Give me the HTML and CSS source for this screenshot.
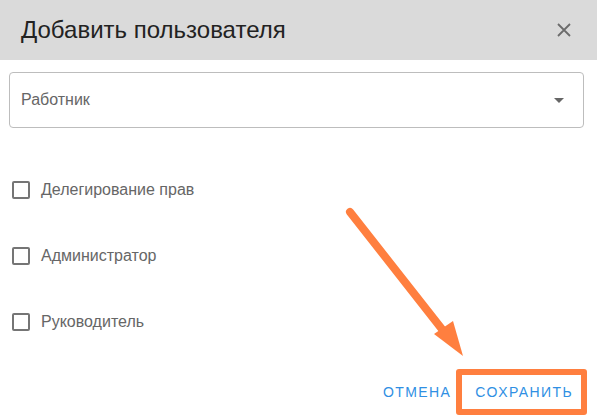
FILE: index.html
```html
<!DOCTYPE html>
<html lang="ru">
<head>
    <meta charset="UTF-8">
    <title>Добавить пользователя</title>
    <link rel="stylesheet" href="styles.css">
</head>
<body>

<div class="dialog">
    <div class="dialog-header">
        <h2>Добавить пользователя</h2>
        <button class="close-btn" aria-label="Закрыть">
            <svg width="14" height="14" viewBox="0 0 14 14">
                <path d="M1 1 L13 13 M13 1 L1 13" stroke="#6b6b6b" stroke-width="1.8" fill="none"/>
            </svg>
        </button>
    </div>

    <div class="dialog-body">
        <div class="select">
            <span>Работник</span>
            <span class="select-arrow"></span>
        </div>

        <div class="checks">
            <label class="check"><span class="box"></span>Делегирование прав</label>
            <label class="check"><span class="box"></span>Администратор</label>
            <label class="check"><span class="box"></span>Руководитель</label>
        </div>
    </div>

    <div class="dialog-actions">
        <button class="btn-text btn-cancel">Отмена</button>
        <div class="marked">
            <button class="btn-text btn-save">Сохранить</button>
        </div>
    </div>

    <svg class="annotation" width="597" height="420" viewBox="0 0 597 420">
        <line x1="350" y1="212" x2="445" y2="333" stroke="#ff7f3f" stroke-width="8" stroke-linecap="round"/>
        <polygon points="434,334 453,321 463,356" fill="#ff7f3f"/>
    </svg>
</div>

</body>
</html>
```

FILE: styles.css
```css
body { margin: 0; font-family: "Liberation Sans", Arial, sans-serif; background: #fff; }
.dialog { position: relative; width: 597px; height: 420px; background: #fff; display: flex; flex-direction: column; overflow: hidden; }
.dialog-header { height: 60px; flex-shrink: 0; background: #dadada; display: flex; align-items: center; justify-content: space-between; padding: 0 26px 0 21px; }
.dialog-header h2 { margin: 0; font-size: 24px; font-weight: normal; color: #222; }
.close-btn { background: none; border: none; padding: 0; display: flex; cursor: pointer; }
.dialog-body { padding: 12px 13px 0 9px; flex: 1; }
.select { height: 54px; border: 1px solid #bdbdbd; border-radius: 4px; display: flex; align-items: center; justify-content: space-between; padding: 0 19px 0 11px; font-size: 16px; color: #666; }
.select-arrow { width: 0; height: 0; border-left: 5px solid transparent; border-right: 5px solid transparent; border-top: 5px solid #666; }
.checks { margin-top: 53px; display: flex; flex-direction: column; gap: 48px; }
.check { display: flex; align-items: center; height: 18px; font-size: 16px; color: #666; padding-left: 3px; }
.box { width: 14px; height: 14px; border: 2px solid #757575; border-radius: 2px; margin-right: 11px; }
.dialog-actions { display: flex; justify-content: flex-end; align-items: center; height: 46px; padding: 0 10px 5px 0; flex-shrink: 0; }
.btn-text { background: none; border: none; font-family: inherit; font-size: 14px; letter-spacing: 1.4px; text-transform: uppercase; color: #2f8fe3; cursor: pointer; }
.btn-cancel { padding: 8px 5px 8px 8px; }
.marked { border: 6px solid #ff7f3f; border-radius: 3px; height: 34px; display: flex; }
.btn-save { padding: 0 8px 0 13px; }
.annotation { position: absolute; left: 0; top: 0; pointer-events: none; }
```
